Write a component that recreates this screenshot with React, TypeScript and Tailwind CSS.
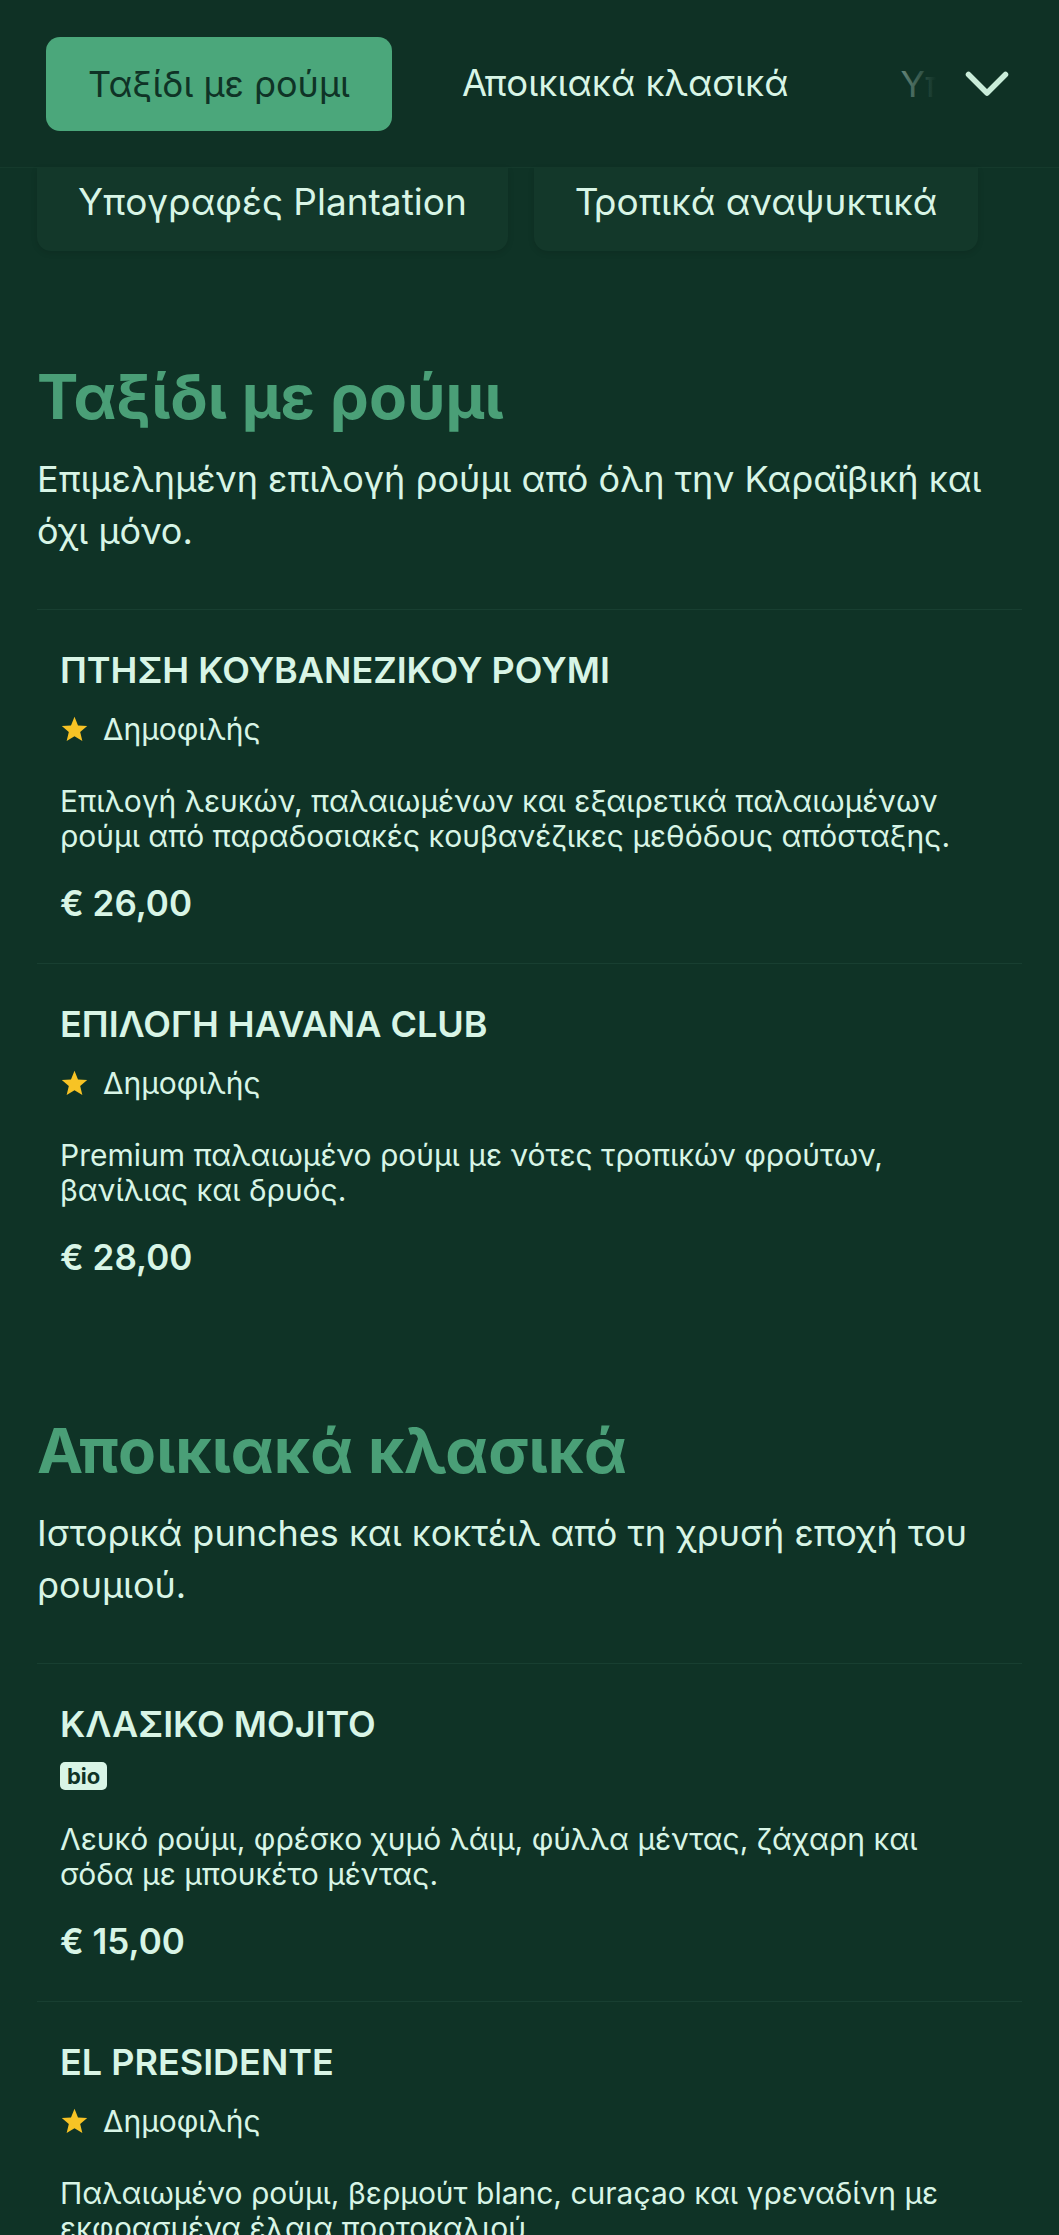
import React from "react";

type Item = {
  title: string;
  tag: "popular" | "bio";
  desc: string[];
  price: string;
};

type Section = {
  title: string;
  desc: string;
  items: Item[];
};

const sections: Section[] = [
  {
    title: "Ταξίδι με ρούμι",
    desc: "Επιμελημένη επιλογή ρούμι από όλη την Καραϊβική και όχι μόνο.",
    items: [
      {
        title: "ΠΤΗΣΗ ΚΟΥΒΑΝΕΖΙΚΟΥ ΡΟΥΜΙ",
        tag: "popular",
        desc: [
          "Επιλογή λευκών, παλαιωμένων και εξαιρετικά παλαιωμένων",
          "ρούμι από παραδοσιακές κουβανέζικες μεθόδους απόσταξης.",
        ],
        price: "€ 26,00",
      },
      {
        title: "ΕΠΙΛΟΓΗ HAVANA CLUB",
        tag: "popular",
        desc: [
          "Premium παλαιωμένο ρούμι με νότες τροπικών φρούτων,",
          "βανίλιας και δρυός.",
        ],
        price: "€ 28,00",
      },
    ],
  },
  {
    title: "Αποικιακά κλασικά",
    desc: "Ιστορικά punches και κοκτέιλ από τη χρυσή εποχή του ρουμιού.",
    items: [
      {
        title: "ΚΛΑΣΙΚΟ MOJITO",
        tag: "bio",
        desc: [
          "Λευκό ρούμι, φρέσκο χυμό λάιμ, φύλλα μέντας, ζάχαρη και",
          "σόδα με μπουκέτο μέντας.",
        ],
        price: "€ 15,00",
      },
      {
        title: "EL PRESIDENTE",
        tag: "popular",
        desc: [
          "Παλαιωμένο ρούμι, βερμούτ blanc, curaçao και γρεναδίνη με",
          "εκφρασμένα έλαια πορτοκαλιού.",
        ],
        price: "€ 22,00",
      },
    ],
  },
];

function Star() {
  return (
    <svg width="29" height="29" viewBox="0 0 24 24" aria-hidden="true">
      <polygon
        points="12,1.5 14.9,8.6 22.5,9.2 16.7,14.1 18.5,21.6 12,17.6 5.5,21.6 7.3,14.1 1.5,9.2 9.1,8.6"
        fill="#f7c325"
      />
    </svg>
  );
}

function MenuItem({ item }: { item: Item }) {
  return (
    <div className="border-t border-[#183f31] px-[23px] pt-[40px] pb-[40px]">
      <div className="text-[36px] leading-[40px] font-semibold text-[#d8f5e6]">{item.title}</div>
      {item.tag === "popular" ? (
        <div className="mt-[21px] flex h-[36px] items-center gap-[14px]">
          <Star />
          <span className="text-[30px] leading-[36px] text-[#d8f5e6]">Δημοφιλής</span>
        </div>
      ) : (
        <div className="mt-[18px] flex h-[28px] items-center">
          <span className="flex h-[28px] items-center rounded-[5px] bg-[#d8f5e6] px-[7px] text-[22px] font-bold leading-none text-[#0f3326]">
            bio
          </span>
        </div>
      )}
      <div
        className={
          (item.tag === "popular" ? "mt-[37px]" : "mt-[32px]") +
          " text-[30px] leading-[35px] text-[#d8f5e6]"
        }
      >
        {item.desc.map((l, i) => (
          <div key={i}>{l}</div>
        ))}
      </div>
      <div className="mt-[29px] text-[35px] leading-[40px] font-semibold text-[#d8f5e6]">{item.price}</div>
    </div>
  );
}

export default function App() {
  return (
    <div
      className="min-h-screen w-full overflow-hidden bg-[#0f3326]"
      style={{ fontFamily: "Inter, 'Noto Sans', sans-serif" }}
    >
      <div className="flex h-[168px] items-center border-b border-[#153a2c] bg-[#0f3125] pl-[46px] pr-[50px]">
        <div className="relative flex h-[94px] w-[890px] items-center gap-[28px] overflow-hidden">
          <div className="flex h-[94px] shrink-0 items-center rounded-[14px] bg-[#4ba77b] px-[42px] text-[36px] text-[#0f3326]">
            Ταξίδι με ρούμι
          </div>
          <div className="flex h-[94px] shrink-0 items-center px-[42px] text-[36.5px] text-[#d8f5e6]">
            Αποικιακά κλασικά
          </div>
          <div className="flex h-[94px] shrink-0 items-center px-[42px] text-[36px] text-[#d8f5e6]">
            Υπογραφές Plantation
          </div>
          <div className="pointer-events-none absolute right-0 top-0 h-full w-[80px] bg-gradient-to-r from-[#0f312500] to-[#0f3125]" />
        </div>
        <div className="ml-auto flex h-[40px] w-[44px] items-center justify-center">
          <svg width="44" height="26" viewBox="0 0 44 26" fill="none" aria-hidden="true">
            <polyline
              points="3.5,3.5 22,22 40.5,3.5"
              stroke="#c9ecd9"
              strokeWidth="5.5"
              strokeLinecap="round"
              strokeLinejoin="round"
            />
          </svg>
        </div>
      </div>

      {/* Wrapped category tabs (scrolled under header) */}
      <div className="flex gap-[26px] px-[37px]">
        <div className="h-[83px] rounded-b-[14px] bg-[#13382a] px-[41px] pt-[14px] text-[37px] leading-[40px] text-[#d8f5e6] shadow-[0_2px_6px_rgba(0,0,0,0.12)]">
          Υπογραφές Plantation
        </div>
        <div className="h-[83px] rounded-b-[14px] bg-[#13382a] px-[41px] pt-[14px] text-[37px] leading-[40px] text-[#d8f5e6] shadow-[0_2px_6px_rgba(0,0,0,0.12)]">
          Τροπικά αναψυκτικά
        </div>
      </div>

      {sections.map((s, si) => (
        <div key={si} className={(si === 0 ? "mt-[108px]" : "mt-[96px]") + " px-[37px]"}>
          <h2 className="text-[62px] leading-[75px] font-bold text-[#4a9f77]">{s.title}</h2>
          <p className="mt-[19px] mb-[52px] text-[36px] leading-[52px] text-[#d8f5e6]">{s.desc}</p>
          {s.items.map((it, ii) => (
            <MenuItem key={ii} item={it} />
          ))}
        </div>
      ))}
    </div>
  );
}
